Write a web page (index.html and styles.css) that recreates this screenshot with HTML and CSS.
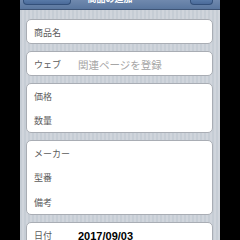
FILE: index.html
```html
<!DOCTYPE html>
<html>
<head>
<meta charset="utf-8">
<link rel="stylesheet" href="styles.css">
</head>
<body>
<div class="screen">
  <div class="navbar">
    <div class="btn btn-left"></div>
    <div class="title">商品の追加</div>
    <div class="btn btn-right"></div>
  </div>
  <div class="content">
    <div class="card">
      <div class="row"><span class="label">商品名</span></div>
    </div>
    <div class="card">
      <div class="row"><span class="label">ウェブ</span><span class="placeholder">関連ページを登録</span></div>
    </div>
    <div class="card">
      <div class="row"><span class="label">価格</span></div>
      <div class="row"><span class="label">数量</span></div>
    </div>
    <div class="card">
      <div class="row"><span class="label">メーカー</span></div>
      <div class="row"><span class="label">型番</span></div>
      <div class="row"><span class="label">備考</span></div>
    </div>
    <div class="card">
      <div class="row"><span class="label">日付</span><span class="value">2017/09/03</span></div>
    </div>
  </div>
</div>
</body>
</html>
```
FILE: styles.css
```css
html, body {
  margin: 0;
  padding: 0;
  background: #000;
  height: 240px;
  overflow: hidden;
}
.screen {
  width: 200px;
  height: 240px;
  margin-left: 20px;
  background: repeating-linear-gradient(90deg, #c6cdd5 0, #c6cdd5 2px, #d0d5dc 2px, #d0d5dc 4px);
  overflow: hidden;
  font-family: "Noto Sans CJK JP", sans-serif;
}
.navbar {
  height: 9px;
  display: flex;
  align-items: flex-start;
  overflow: hidden;
  background: linear-gradient(#7089ae, #5a779f);
  border-bottom: 1px solid #3f5577;
}
.btn {
  height: 4px;
  background: linear-gradient(#587aa8, #4a6a99);
  border: 1px solid #33507a;
  border-top: none;
  border-radius: 0 0 4px 4px;
  flex: none;
}
.btn-left {
  width: 46px;
  margin-left: 3px;
}
.btn-right {
  width: 21px;
  margin-right: 7px;
}
.title {
  flex: 1;
  text-align: center;
  color: #fff;
  font-weight: bold;
  font-size: 9px;
  line-height: 9px;
  margin-top: -6px;
  padding-right: 41px;
  white-space: nowrap;
}
.content {
  display: flex;
  flex-direction: column;
  gap: 7px;
  padding: 9px 7px 0 6px;
}
.card {
  background: #fff;
  border: 1px solid #a9adb4;
  border-radius: 5px;
}
.row {
  height: 25px;
  display: flex;
  align-items: center;
  padding-left: 7px;
  box-sizing: border-box;
}
.card .row:first-child { height: 23px; }
.label {
  width: 44px;
  flex: none;
  font-size: 9px;
  color: #5c5c5c;
  padding-top: 2px;
}
.placeholder {
  font-size: 10.5px;
  color: #a6a6a6;
  padding-top: 2px;
}
.value {
  font-family: "Liberation Sans", Arial, sans-serif;
  font-weight: bold;
  font-size: 11px;
  color: #000;
  padding-top: 2px;
}
```
